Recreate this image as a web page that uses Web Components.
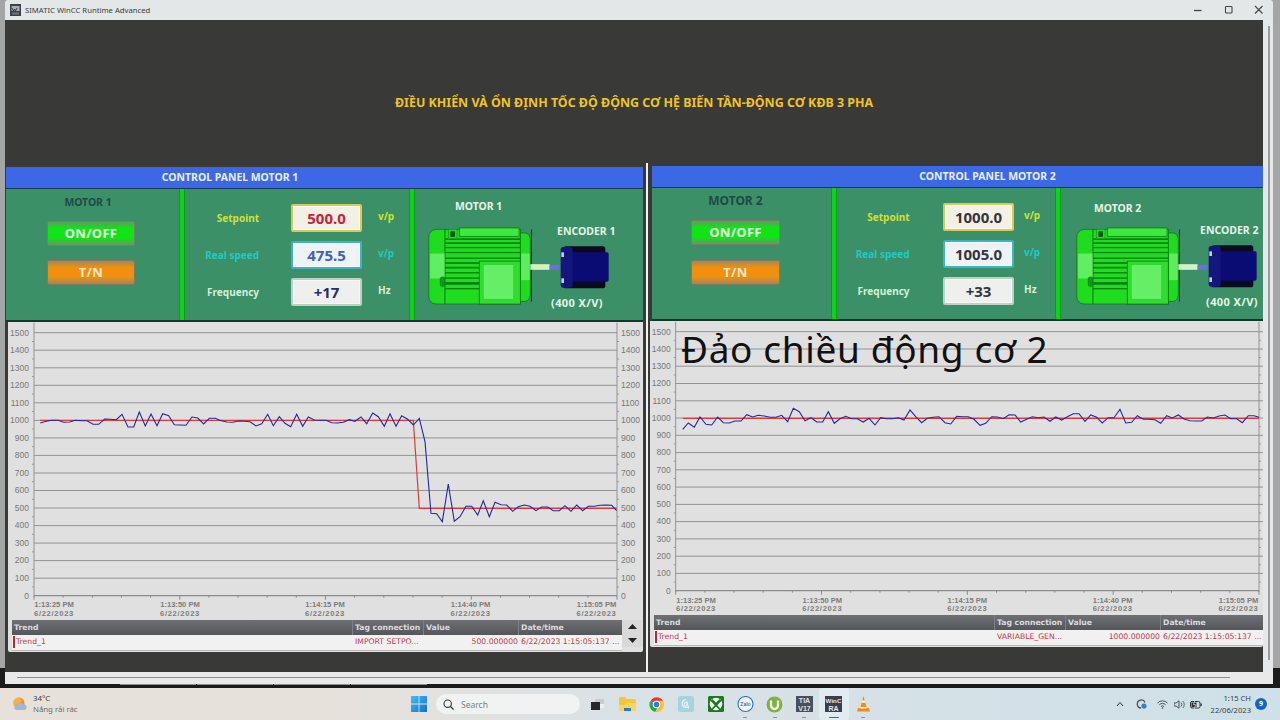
<!DOCTYPE html>
<html lang="vi"><head><meta charset="utf-8"><title>SIMATIC WinCC Runtime Advanced</title>
<style>html,body{margin:0;padding:0;background:#8c8c8c;overflow:hidden}</style></head>
<body>
<hmi-desktop>
  <hmi-titlebar slot="title">SIMATIC WinCC Runtime Advanced</hmi-titlebar>
  <hmi-banner slot="banner">ĐIỀU KHIỂN VÀ ỔN ĐỊNH TỐC ĐỘ ĐỘNG CƠ HỆ BIẾN TẦN-ĐỘNG CƠ KĐB 3 PHA</hmi-banner>
  <motor-panel slot="left" n="1" sp="500.0" rs="475.5" hz="+17" variant="a"></motor-panel>
  <motor-panel slot="right" n="2" sp="1000.0" rs="1005.0" hz="+33" variant="b"></motor-panel>
  <win-taskbar slot="taskbar"></win-taskbar>
</hmi-desktop>
<template id="motor-art">
  <svg xmlns="http://www.w3.org/2000/svg" width="132" height="78" viewBox="85 200 395 235" style="display:block">
    <path d="M135 207H108Q86 210 86 232V408Q86 430 108 432H135Z" fill="#1fdc1f" stroke="#0b6a12" stroke-width="2"/>
    <rect x="90" y="280" width="45" height="75" fill="#62ee62"/><rect x="120" y="350" width="15" height="30" rx="7" fill="#0e9a18" stroke="#0b6a12"/>
    <rect x="135" y="207" width="227" height="225" fill="#1fdc1f" stroke="#0b6a12" stroke-width="2"/>
    <g fill="#0c7c16"><rect x="135" y="234" width="227" height="5"/><rect x="135" y="246" width="227" height="5"/><rect x="135" y="260" width="227" height="4"/><rect x="135" y="275" width="227" height="4"/><rect x="135" y="292" width="227" height="4"/><rect x="135" y="306" width="105" height="5"/><rect x="135" y="320" width="105" height="5"/><rect x="135" y="336" width="105" height="4"/><rect x="135" y="352" width="105" height="4"/><rect x="135" y="366" width="105" height="8"/><rect x="135" y="384" width="105" height="4"/></g>
    <rect x="145" y="207" width="26" height="28" fill="#27d827" stroke="#0b6a12"/><rect x="151" y="213" width="14" height="17" rx="3" fill="#0b5a14"/>
    <rect x="178" y="203" width="180" height="25" fill="#3cea3c" stroke="#0b6a12" stroke-width="2"/>
    <rect x="238" y="303" width="124" height="129" fill="#2fdd2f" stroke="#0b6a12" stroke-width="2"/>
    <rect x="250" y="313" width="92" height="105" fill="#66ee66" stroke="#1aa82a"/>
    <path d="M362 218H378Q392 222 392 240V402Q392 420 378 424H362Z" fill="#1fdc1f" stroke="#0b6a12" stroke-width="2"/>
    <rect x="364" y="280" width="26" height="80" fill="#5eee5e"/>
    <rect x="394" y="207" width="3" height="218" fill="#123c20"/>
    <rect x="392" y="312" width="58" height="17" fill="#d4f2c4"/><rect x="450" y="314" width="30" height="15" fill="#6e70d8"/>
  </svg>
</template>
<template id="encoder-art">
  <svg xmlns="http://www.w3.org/2000/svg" width="49" height="43" viewBox="480 257 147 129" style="display:block">
    <rect x="490" y="258" width="126" height="126" rx="8" fill="#0a0a20"/>
    <rect x="505" y="276" width="121" height="88" rx="5" fill="#0b0b74"/>
    <rect x="482" y="260" width="36" height="122" rx="8" fill="#15157e"/>
    <rect x="484" y="276" width="8" height="14" fill="#c8c8e8"/><rect x="484" y="354" width="8" height="14" fill="#c8c8e8"/>
  </svg>
</template>
<script>
function define(name,html){
  customElements.define(name,class extends HTMLElement{
    constructor(){super();this.attachShadow({mode:'open'});}
    connectedCallback(){this.shadowRoot.innerHTML=typeof html==='function'?html(this):html;}
  });
}
const UI='"Noto Sans",sans-serif';

/* ---------- desktop shell ---------- */
define('hmi-desktop',`<style>
:host{display:flex;flex-direction:column;width:1280px;height:720px;overflow:hidden;background:linear-gradient(#a4a6a6 668px,#1b1b1b 668px);font-family:${UI}}
.win{flex:1;display:flex;flex-direction:column;margin:0 7px 0 5px;background:#e6e9e9;border-radius:4px 4px 0 0;min-height:0}
.client{flex:1;display:flex;min-height:0;background:#e6e9e9}
.inner{width:1258px;background:#393938;display:flex;flex-direction:column}
.rail{flex:1;position:relative}
.rail i{display:block;position:absolute;left:5px;top:6px;bottom:12px;width:2px;background:#9a9c9c}
.row{flex:1;display:flex;min-height:0}
.sep{width:9px;display:flex;padding-left:3px;box-sizing:border-box}
.sep i{display:block;width:2px;background:#f2f2f2}
.foot{height:12px;background:#e8e9e8;display:flex;align-items:center;padding:0 43px 0 12px;border-radius:0 0 0 5px}
.foot i{flex:1;height:1px;background:#8e8e8e;margin-top:-2px}
.shadow{height:4px;background:#1b1b1b;margin-left:-5px;margin-right:-7px;display:flex;padding-left:120px;gap:1px}
.shadow b{display:block;width:76px;height:1px;background:#8d8d8d}
::slotted([slot=left]){margin:4px 0 0 1px}
::slotted([slot=right]){margin:3px 0 0 -2px}
</style>
<div class="win"><slot name="title"></slot>
  <div class="client"><div class="inner"><slot name="banner"></slot>
    <div class="row"><slot name="left"></slot><div class="sep"><i></i></div><slot name="right"></slot></div>
  </div><div class="rail"><i></i></div></div>
  <div class="foot"><i></i></div>
  <div class="shadow"><b></b><b></b><b></b><b></b></div>
</div>
<slot name="taskbar"></slot>`);

define('hmi-titlebar',`<style>
:host{display:flex;align-items:center;height:20px;background:#e3e7e7;border-radius:4px 4px 0 0;color:#3a3d40;font:7.7px "Noto Sans",sans-serif;padding-left:5px;box-sizing:border-box}
svg{display:block;flex:none}
.t{flex:1;margin-left:4px}
.b{display:flex;margin-right:7px;gap:16.5px}
</style>
<svg width="11" height="12" viewBox="0 0 11 12"><rect width="11" height="12" fill="#3c4048"/><rect x="1.5" y="2" width="8" height="5" fill="#a9adb6"/><path d="M2 4l1.5 3 1-2 1 2 1.5-3" stroke="#23262c" fill="none" stroke-width=".8"/><rect x="2" y="8.5" width="7" height="2" fill="#6f747e"/></svg>
<span class="t"><slot></slot></span>
<div class="b">
<svg width="14" height="14" viewBox="0 0 14 14"><path d="M3 7.5H10.5" stroke="#444" stroke-width="1.3"/></svg>
<svg width="14" height="14" viewBox="0 0 14 14"><rect x="3.5" y="3.5" width="6.5" height="6.5" rx=".8" fill="none" stroke="#444" stroke-width="1.1"/></svg>
<svg width="14" height="14" viewBox="0 0 14 14"><path d="M3 3L10.500 10.500M10.500 3L3 10.500" stroke="#444" stroke-width="1.1"/></svg>
</div>`);

define('hmi-banner',`<style>
:host{display:flex;height:143px;box-sizing:border-box;padding:74px 0 0 390px;color:#f0c428;font:bold 12.45px ${UI};white-space:nowrap}
</style><slot></slot>`);

/* ---------- motor panel ---------- */
const V={a:{w:637,c1:173,c2:224,lab:74,g1:32,g2:16,mt:6,mf:10.4,art:13,mm:27,enc:'-3px',vals:['#c62238','#4560b8','#2a2a70'],ml:41,bw:88,framew:635,frameh:330},
     b:{w:613,c1:179,c2:218,lab:72.5,g1:33.5,g2:10,mt:6,mf:12,art:15,mm:18,enc:'-8px',vals:['#35353c','#35353c','#35353c'],ml:39,bw:89,framew:613,frameh:326}};
customElements.define('motor-panel',class extends HTMLElement{
  constructor(){super();this.attachShadow({mode:'open'});}
  connectedCallback(){
    const n=this.getAttribute('n'),k=this.getAttribute('variant'),v=V[k],isA=k==='a';
    const art=document.getElementById('motor-art').innerHTML,enc=document.getElementById('encoder-art').innerHTML;
    this.shadowRoot.innerHTML=`<style>
:host{display:block;width:${v.w}px;font-family:${UI}}
.wrap{margin-left:${isA?0:2}px}
.head{height:21px;margin-bottom:1px;background:#3c68e6;color:#e8f0ff;font:bold 10.45px/20px ${UI};text-align:center;box-shadow:0 1px 0 #173a5c;${isA?'padding-right:189px':'padding-left:60px'}}
.body{display:flex;height:131px;background:#3c9068;box-shadow:0 2px 0 #17352b}
.c1{width:${v.c1}px;flex:none;display:flex;flex-direction:column;padding-left:${v.ml}px;box-sizing:border-box}
.c1 h4{margin:${v.mt}px 0 12px ${isA?'-41px':'-39px'};width:${isA?'164px':'167px'};text-align:center;font:bold ${v.mf}px/14px ${UI};color:#1f4a47}
.div{width:6px;flex:none;background:#10d21a;box-shadow:inset 1px 0 0 #0aa016,inset -1px 0 0 #0aa016}
.c2{width:${v.c2}px;flex:none;display:grid;grid-template-columns:${v.lab}px ${71+v.g1}px auto;grid-auto-rows:28px;row-gap:9px;padding-top:15px;box-sizing:border-box;align-items:center}
.lab{font:bold 10px ${UI};text-align:right;white-space:nowrap}
hmi-value{margin-left:${v.g1}px}
.unit{font:bold 10px ${UI};margin-left:${v.g2}px;margin-top:-4px}
.c3{flex:1;display:flex;min-width:0;padding-left:${v.art}px;color:#e6f4e6}
.mot{width:132px;flex:none}
.mot h4{margin:${isA?'10px':'13px'} 0 ${isA?'14px':'12px'} ${v.mm}px;font:bold 10.4px/14px ${UI};white-space:nowrap}
.enc{flex:none;width:49px;padding-top:35px}
.enc h4{margin:0 0 8px ${v.enc};font:bold 10.5px/14px ${UI};white-space:nowrap;width:60px}
.enc p{margin:7px 0 0 ${isA?'-9px':'-2px'};font:bold 11px/14px ${UI};letter-spacing:.4px;white-space:nowrap}
.frame{margin-top:2px;margin-left:${isA?2:0}px;width:${v.framew}px;height:${v.frameh}px;background:#e0e0e0;border-radius:0 0 2px 2px;position:relative}
.flash{position:absolute;left:31px;top:6px;font:400 37px/44px "Noto Sans",sans-serif;letter-spacing:.65px;color:#111;white-space:nowrap}
</style><div class="wrap">
<div class="head">CONTROL PANEL MOTOR ${n}</div>
<div class="body">
 <div class="c1"><h4>MOTOR ${n}</h4><hmi-button tone="green" w="${v.bw}">ON/OFF</hmi-button><hmi-button tone="orange" w="${v.bw}" style="margin-top:${isA?14:15}px">T/N</hmi-button></div>
 <div class="div"></div>
 <div class="c2">
  <span class="lab" style="color:#d2e032">Setpoint</span><hmi-value edge="#d9c95c" tint="#f3f1e6" ink="${v.vals[0]}">${this.getAttribute('sp')}</hmi-value><span class="unit" style="color:#d2e032">v/p</span>
  <span class="lab" style="color:#22c8c6">Real speed</span><hmi-value edge="#3fb2c6" tint="#eef3f5" ink="${v.vals[1]}">${this.getAttribute('rs')}</hmi-value><span class="unit" style="color:#22c8c6">v/p</span>
  <span class="lab" style="color:#d5efd5">Frequency</span><hmi-value edge="#bcd2c4" tint="#efefee" ink="${v.vals[2]}">${this.getAttribute('hz')}</hmi-value><span class="unit" style="color:#d5efd5">Hz</span>
 </div>
 <div class="div"></div>
 <div class="c3"><div class="mot"><h4>MOTOR ${n}</h4>${art}</div><div class="enc"><h4>ENCODER ${n}</h4>${enc}<p>(400 X/V)</p></div></div>
</div></div>
<div class="frame"><trend-chart kind="${k}"></trend-chart><trend-table kind="${k}"></trend-table>${isA?'':'<div class="flash">Đảo chiều động cơ 2</div>'}</div>`;
  }
});
define('hmi-button',el=>{
  const g=el.getAttribute('tone')==='green'?['#5f9c62','#10e414','#74806a','#edfdee']:['#a3875a','#f0900e','#7f7a62','#f6e6cc'];
  return `<style>:host{display:block;width:${el.getAttribute('w')}px;height:25px;box-sizing:border-box;border:1px solid ${g[2]};border-radius:2px;background:linear-gradient(${g[0]},${g[1]} 28%,${g[1]} 68%,${g[0]});color:${g[3]};font:bold 13px/23px ${UI};letter-spacing:.3px;text-align:center}</style><slot></slot>`;
});
define('hmi-value',el=>`<style>:host{display:flex;align-items:center;justify-content:center;width:71px;height:28px;box-sizing:border-box;border:2px solid ${el.getAttribute('edge')};border-radius:2px;background:${el.getAttribute('tint')};color:${el.getAttribute('ink')};font:bold 15px ${UI};box-shadow:inset 0 0 0 1px rgba(255,255,255,.5)}</style><slot></slot>`);

/* ---------- trends ---------- */
const blueA=[[121,309],[139,304],[156,301],[174,301],[191,307],[209,306],[226,301],[244,302],[261,302],[279,313],[296,313],[314,297],[331,298],[349,299],[366,283],[384,321],[401,321],[418,276],[436,318],[453,282],[471,317],[488,281],[506,287],[523,314],[541,315],[558,316],[576,291],[593,294],[611,312],[628,295],[646,295],[663,302],[681,306],[698,307],[716,303],[733,304],[750,305],[768,318],[785,311],[803,283],[820,317],[838,290],[855,310],[872,320],[890,283],[908,319],[925,291],[943,300],[960,301],[978,301],[995,308],[1013,309],[1030,307],[1048,299],[1065,304],[1083,291],[1100,311],[1118,279],[1135,290],[1153,319],[1170,281],[1188,319],[1205,287],[1223,298],[1240,315],[1258,295],[1275,365],[1293,580],[1310,581],[1327,605],[1345,492],[1363,604],[1380,590],[1398,559],[1415,559],[1433,585],[1450,542],[1468,590],[1485,547],[1503,554],[1520,555],[1538,574],[1555,560],[1573,555],[1590,559],[1608,572],[1625,561],[1643,561],[1660,572],[1678,572],[1695,557],[1713,574],[1730,555],[1748,572],[1765,559],[1783,559],[1800,556],[1818,555],[1835,556],[1850,572]];
const blueB1=[[848,328],[865,309],[883,322],[900,291],[918,313],[935,315],[953,291],[970,308],[988,309],[1005,303],[1023,303],[1040,284],[1058,291],[1075,286],[1093,288],[1110,292],[1128,292],[1145,286],[1163,305],[1180,265],[1198,275],[1215,302],[1233,293],[1250,306],[1268,306],[1285,275],[1303,310],[1320,296]];
const blueB2=[[17,289],[35,296],[52,296],[70,306],[87,295],[105,315],[122,293],[140,296],[157,296],[175,293],[192,300],[210,270],[227,290],[245,308],[262,295],[280,292],[297,290],[315,308],[332,312],[350,289],[367,290],[385,290],[402,298],[420,316],[437,310],[455,290],[472,291],[490,296],[507,284],[525,285],[542,306],[560,298],[577,290],[595,293],[612,291],[630,304],[647,291],[665,300],[682,290],[700,281],[717,281],[735,304],[752,285],[770,292],[787,309],[805,293],[822,293],[840,268],[857,309],[875,307],[892,287],[910,298],[927,298],[945,299],[962,310],[980,287],[997,294],[1015,285],[1032,297],[1050,302],[1067,303],[1085,303],[1102,291],[1120,294],[1137,288],[1155,285],[1172,296],[1190,296],[1207,308],[1225,287],[1242,287],[1257,292]];
const CH={
 a:{ox:8,oy:322,w:635,h:298,ax:34,bx:617,yt:332.7,yb:595.7,rightLabels:true,
    blue:blueA.map(p=>[p[0]/3,320+p[1]/3]),red:[[40,420.3],[413.3,420.3],[419.3,508.3],[616.7,508.3]],tx:[54,180,325,470.6,596.5],ly:607,ly2:615.5},
 b:{ox:650,oy:321,w:613,h:294,ax:675.7,bx:1259,yt:331.7,yb:590.7,rightLabels:false,
    blue:[...blueB1.map(p=>[400+p[0]/3,320+p[1]/3]),...blueB2.map(p=>[840+p[0]/3,320+p[1]/3])],red:[[682.7,418.3],[1259,418.3]],tx:[696,822.3,967.3,1112.7,1238.5],ly:602.5,ly2:611}
};
customElements.define('trend-chart',class extends HTMLElement{
  constructor(){super();this.attachShadow({mode:'open'});}
  connectedCallback(){
    const k=this.getAttribute('kind'),c=CH[k],X=x=>(x-c.ox).toFixed(1),Y=y=>(y-c.oy).toFixed(1);
    const step=(c.yb-c.yt)/15;let s='';
    for(let i=0;i<=15;i++){const y=c.yb-i*step;
      if(i>0)s+=`<line x1="${X(c.ax)}" x2="${k==='a'?X(c.bx):X(1263)}" y1="${Y(y)}" y2="${Y(y)}" stroke="#939393" stroke-width="1"/>`;
      s+=`<text x="${X(c.ax-5)}" y="${(+Y(y)+2.8).toFixed(1)}" text-anchor="end" class="l">${i*100}</text>`;
      if(c.rightLabels)s+=`<text x="${X(c.bx+4)}" y="${(+Y(y)+2.8).toFixed(1)}" class="l">${i*100}</text>`;
      if(i<15){const m=y-step/2;s+=`<line x1="${X(c.ax-2)}" x2="${X(c.ax)}" y1="${Y(m)}" y2="${Y(m)}" stroke="#999"/><line x1="${X(c.bx)}" x2="${X(c.bx+2)}" y1="${Y(m)}" y2="${Y(m)}" stroke="#999"/>`;}
    }
    s+=`<line x1="${X(c.ax)}" x2="${X(c.ax)}" y1="${Y(c.yt-10)}" y2="${Y(c.yb+1)}" stroke="#939393"/><line x1="${X(c.bx)}" x2="${X(c.bx)}" y1="${Y(c.yt-10)}" y2="${Y(c.yb+1)}" stroke="#939393"/>`;
    s+=`<line x1="${X(c.ax)}" x2="${X(c.bx)}" y1="${Y(c.yb)}" y2="${Y(c.yb)}" stroke="#8b8b8b" stroke-width="1.2"/>`;
    const dx=(c.bx-c.ax)/20;
    for(let i=0;i<=20;i++){const x=c.ax+i*dx,l=i%5===0?4:2;s+=`<line x1="${X(x)}" x2="${X(x)}" y1="${Y(c.yb)}" y2="${(+Y(c.yb)+l).toFixed(1)}" stroke="#8b8b8b"/>`;}
    ['1:13:25 PM','1:13:50 PM','1:14:15 PM','1:14:40 PM','1:15:05 PM'].forEach((t,i)=>{
      s+=`<text x="${X(c.tx[i])}" y="${Y(c.ly)}" text-anchor="middle" class="t">${t}</text><text x="${X(c.tx[i])}" y="${Y(c.ly2)}" text-anchor="middle" class="t d">6/22/2023</text>`;});
    const pts=a=>a.map(p=>X(p[0])+','+Y(p[1])).join(' ');
    s+=`<polyline points="${pts(c.red)}" fill="none" stroke="#dc3c38" stroke-width="1.2"/><polyline points="${pts(c.blue)}" fill="none" stroke="#2626a0" stroke-width="1.1"/>`;
    this.shadowRoot.innerHTML=`<style>:host{display:block;height:${c.h}px}svg{display:block}
    .l{font:8.5px "Liberation Sans",sans-serif;fill:#777}.t{font:bold 7.6px "Liberation Sans",sans-serif;fill:#7c7c7c}.d{letter-spacing:.7px}</style>
    <svg xmlns="http://www.w3.org/2000/svg" width="${c.w}" height="${c.h}">${s}</svg>`;
  }
});
const TB={a:{ml:4,cols:[340,71,95,104],w:610,cells:['Trend_1','IMPORT SETPO...','500.000000','6/22/2023 1:15:05:137 ...'],sb:true},
          b:{ml:4,cols:[340,71,95,103],w:609,cells:['Trend_1','VARIABLE_GEN...','1000.000000','6/22/2023 1:15:05:137 ...'],sb:false}};
customElements.define('trend-table',class extends HTMLElement{
  constructor(){super();this.attachShadow({mode:'open'});}
  connectedCallback(){const t=TB[this.getAttribute('kind')],g=t.cols.map(c=>c+'px').join(' ');
    this.shadowRoot.innerHTML=`<style>
:host{display:flex;margin-left:${t.ml}px;font:7.7px "DejaVu Sans",sans-serif}
.tb{width:${t.w}px}
.h,.r{display:grid;grid-template-columns:${g}}
.h{height:15px;background:linear-gradient(#6e7074,#54565a);color:#d9dbe0;font-weight:bold;line-height:15px}
.h span{padding-left:2px;border-left:1px solid #7e8084;white-space:nowrap;overflow:hidden}
.h span:first-child{border:0;padding-left:2px}
.r{height:15px;background:#f1f1f1;color:#c23a4a;line-height:14px;border-bottom:1px solid #b9b9b9}
.r span{white-space:nowrap;padding-left:3px}
.r span:first-child{border-left:2px solid #c8202c;margin-left:1px;padding-left:1px;height:12px;line-height:12px;margin-top:1px}
.r span:nth-child(3){text-align:right}
.sb{width:20px;display:flex;flex-direction:column;align-items:center;padding-top:4px;gap:9px;background:#d9d9d9;height:27px;box-sizing:border-box}
.sb svg{display:block}
</style><div class="tb"><div class="h"><span>Trend</span><span>Tag connection</span><span>Value</span><span>Date/time</span></div>
<div class="r">${t.cells.map(c=>`<span>${c}</span>`).join('')}</div></div>
${t.sb?`<div class="sb"><svg width="9" height="5"><path d="M0 5L4.5 0L9 5Z" fill="#222"/></svg><svg width="9" height="5"><path d="M0 0L4.5 5L9 0Z" fill="#222"/></svg></div>`:''}`;
  }
});

/* ---------- taskbar ---------- */
define('win-taskbar',`<style>
:host{display:flex;align-items:center;height:32px;flex:none;background:linear-gradient(90deg,#e7e1da 0,#e6e1dc 28%,#d9e2e6 50%,#cfe0e8 100%);color:#3d4146;font:7.8px "Noto Sans",sans-serif}
.wx{display:flex;align-items:center;width:411px;padding-left:12px;box-sizing:border-box;gap:5px}
.wx div{line-height:11px}.wx .d{color:#6a6c70}
.apps{display:flex;align-items:center}
.search{display:flex;align-items:center;gap:7px;width:144px;height:20px;box-sizing:border-box;padding-left:7px;margin:0 3px 0 9px;border-radius:10px;background:#f1f3f3;color:#7b7e82;font-size:8.5px}
.ic{width:29.5px;display:flex;justify-content:center;position:relative;height:32px;align-items:center}
.ic.dot:after{content:"";position:absolute;bottom:2px;left:50%;margin-left:-2px;width:4px;height:1.5px;border-radius:1px;background:#8a8e92}
.ic.on:after{width:10px;margin-left:-5px;background:#1f6fc0}
.ic.on{background:#e2ecf0;border-radius:3px}
.tray{margin-left:auto;display:flex;align-items:center}
.tray svg{display:block}
.clock{text-align:right;line-height:12px;margin-left:9px;color:#3a3e42;font-size:7.6px}
.badge{width:12px;height:12px;border-radius:50%;background:#1567b5;color:#fff;font:bold 7px/12px "Noto Sans",sans-serif;text-align:center;margin:0 13px 0 4px}
text{font-family:"Liberation Sans",sans-serif}
</style>
<div class="wx">
 <svg width="16" height="16" viewBox="0 0 16 16"><circle cx="7" cy="7" r="5.5" fill="#e8952c"/><path d="M7 1.5A5.500 5.500 0 0 0 2 10L10 5Z" fill="#f3b24a"/><path d="M4 14a2.600 2.600 0 0 1 .4-5 3.400 3.400 0 0 1 6.300-.6A2.800 2.800 0 0 1 12.500 14Z" fill="#9fb8d4"/></svg>
 <div><div>34°C</div><div class="d">Nắng rải rác</div></div>
</div>
<div class="apps">
 <svg width="16" height="16" viewBox="0 0 16 16"><defs><linearGradient id="w" x2="1" y2="1"><stop stop-color="#3fc0f4"/><stop offset="1" stop-color="#1070d0"/></linearGradient></defs><path fill="url(#w)" d="M0 0h7.600v7.600H0zM8.400 0H16v7.600H8.400zM0 8.400h7.600V16H0zM8.400 8.400H16V16H8.400z"/></svg>
 <div class="search"><svg width="11" height="11" viewBox="0 0 11 11"><circle cx="4.7" cy="4.7" r="3.7" fill="none" stroke="#333" stroke-width="1.1"/><path d="M7.5 7.5L10.500 10.500" stroke="#333" stroke-width="1.2"/></svg><span>Search</span></div>
 <div class="ic"><svg width="13" height="11" viewBox="0 0 13 11"><path d="M4 0h9v9H4z" fill="#c9cccd"/><path d="M0 3h9v8H0z" fill="#26282a"/><path d="M9 5h4v4H9z" fill="#eef0f0"/></svg></div>
 <div class="ic"><svg width="17" height="14" viewBox="0 0 17 14"><path d="M0 1.500Q0 0 1.500 0H6L8 2H15.500Q17 2 17 3.500V12.500Q17 14 15.500 14H1.500Q0 14 0 12.500Z" fill="#f4c63e"/><path d="M0 8H6L7.500 6H17V12.500Q17 14 15.500 14H1.500Q0 14 0 12.500Z" fill="#f9d75e"/><path d="M5 11h7v3H5z" fill="#2a78c8"/></svg></div>
 <div class="ic"><svg width="17" height="17" viewBox="0 0 32 32"><path d="M16 16L5 9.500A13 13 0 0 1 28 9.500Z" fill="#e33b2e"/><path d="M4.400 9.200A14 14 0 0 0 14 29.800L20 19Z" fill="#2ea44f"/><path d="M28 9H16L22 19L14 30A14 14 0 0 0 28 9Z" fill="#fbc02d"/><circle cx="16" cy="16" r="7" fill="#fff"/><circle cx="16" cy="16" r="5.3" fill="#3278e4"/></svg></div>
 <div class="ic"><svg width="16" height="16" viewBox="0 0 16 16"><rect width="16" height="16" rx="2" fill="#a7d3de"/><path d="M8 3.500a4 4 0 1 0 2.800 7" fill="none" stroke="#e8f4f8" stroke-width="1.2"/><path d="M8 6a2 2 0 1 0 1 3.800V5.500l1.500 7" fill="none" stroke="#e8f4f8"/></svg></div>
 <div class="ic"><svg width="16" height="16" viewBox="0 0 16 16"><rect width="16" height="16" rx="1.5" fill="#1a7a1c"/><circle cx="8" cy="8" r="6.3" fill="#fff"/><path d="M4.200 2.900Q8 6 8 6.800Q8 6 11.800 2.900L13.500 5Q9.800 8 9.500 9.500L13 13.300L11.500 14L8 10.500L4.500 14L3 13.300L6.500 9.500Q6.200 8 2.500 5Z" fill="#1a7a1c"/></svg></div>
 <div class="ic dot"><svg width="17" height="17" viewBox="0 0 17 17"><circle cx="8.5" cy="8" r="7.5" fill="#f4f8fc" stroke="#2a6fd8" stroke-width="1.1"/><text x="8.5" y="9.8" font-size="5" fill="#2a6fd8" text-anchor="middle" font-weight="bold">Zalo</text></svg></div>
 <div class="ic dot"><svg width="17" height="17" viewBox="0 0 17 17"><circle cx="8.5" cy="8.5" r="8" fill="#7cb342"/><path d="M5 4.500V9.500A3.500 3.500 0 0 0 12 9.500V4.500" fill="none" stroke="#f4f8e8" stroke-width="2.3"/></svg></div>
 <div class="ic dot"><svg width="17" height="16" viewBox="0 0 17 16"><rect width="17" height="16" fill="#4a4f5e"/><text x="8.5" y="7" font-size="7" fill="#dfe3ea" text-anchor="middle" font-weight="bold">TIA</text><text x="8.5" y="14.5" font-size="7" fill="#dfe3ea" text-anchor="middle" font-weight="bold">V17</text></svg></div>
 <div class="ic dot on"><svg width="17" height="16" viewBox="0 0 17 16"><rect width="17" height="16" fill="#3a3f4c"/><text x="8.5" y="7" font-size="6.2" fill="#e6e9ee" text-anchor="middle" font-weight="bold">WinC</text><text x="8.5" y="14.5" font-size="7" fill="#e6e9ee" text-anchor="middle" font-weight="bold">RA</text></svg></div>
 <div class="ic dot"><svg width="13" height="16" viewBox="0 0 13 16"><path d="M6.500 0L9.500 11H3.500Z" fill="#f08c1a"/><path d="M5.300 4.500h2.400l.6 2.200H4.700z" fill="#fff"/><path d="M1 12h11l1 3.500H0Z" fill="#f08c1a"/><path d="M3.500 11h6v1.500h-6z" fill="#fff"/></svg></div>
</div>
<div class="tray">
 <svg width="8" height="6" viewBox="0 0 8 6" style="margin-right:12px"><path d="M1 5L4 1.500L7 5" fill="none" stroke="#333" stroke-width="1"/></svg>
 <svg width="11" height="10" viewBox="0 0 11 10" style="margin-right:10px"><path d="M9 3.500A4 4 0 1 0 5 9" fill="none" stroke="#4a5258" stroke-width="1.3"/><circle cx="8" cy="7" r="2.6" fill="#2a86c8"/></svg>
 <svg width="11" height="9" viewBox="0 0 11 9" style="margin-right:6px"><path d="M.5 3a7 7 0 0 1 10 0M2.300 4.800a4.500 4.500 0 0 1 6.400 0M4 6.500a2.200 2.200 0 0 1 3 0" fill="none" stroke="#3c4248" stroke-width=".9"/><circle cx="5.5" cy="8" r=".8" fill="#3c4248"/></svg>
 <svg width="11" height="9" viewBox="0 0 11 9" style="margin-right:5px"><path d="M0 3H2L5 .8V8.200L2 6H0Z" fill="none" stroke="#3c4248" stroke-width=".9"/><path d="M7 2.500a3 3 0 0 1 0 4M8.800 1a5 5 0 0 1 0 7" fill="none" stroke="#3c4248" stroke-width=".8"/></svg>
 <svg width="12" height="9" viewBox="0 0 12 9"><rect x=".5" y="1.5" width="9.5" height="6.5" rx="1.5" fill="none" stroke="#2e3236"/><rect x="1.5" y="2.5" width="5" height="4.5" fill="#2e3236"/><rect x="10.500" y="3.500" width="1.3" height="2.500" fill="#2e3236"/><path d="M5 0L3.500 4.500H5.500L4.500 9" stroke="#e0e4e6" fill="none" stroke-width=".7"/></svg>
 <div class="clock"><div>1:15 CH</div><div>22/06/2023</div></div>
 <div class="badge">9</div>
</div>`);
</script>
</body></html>
